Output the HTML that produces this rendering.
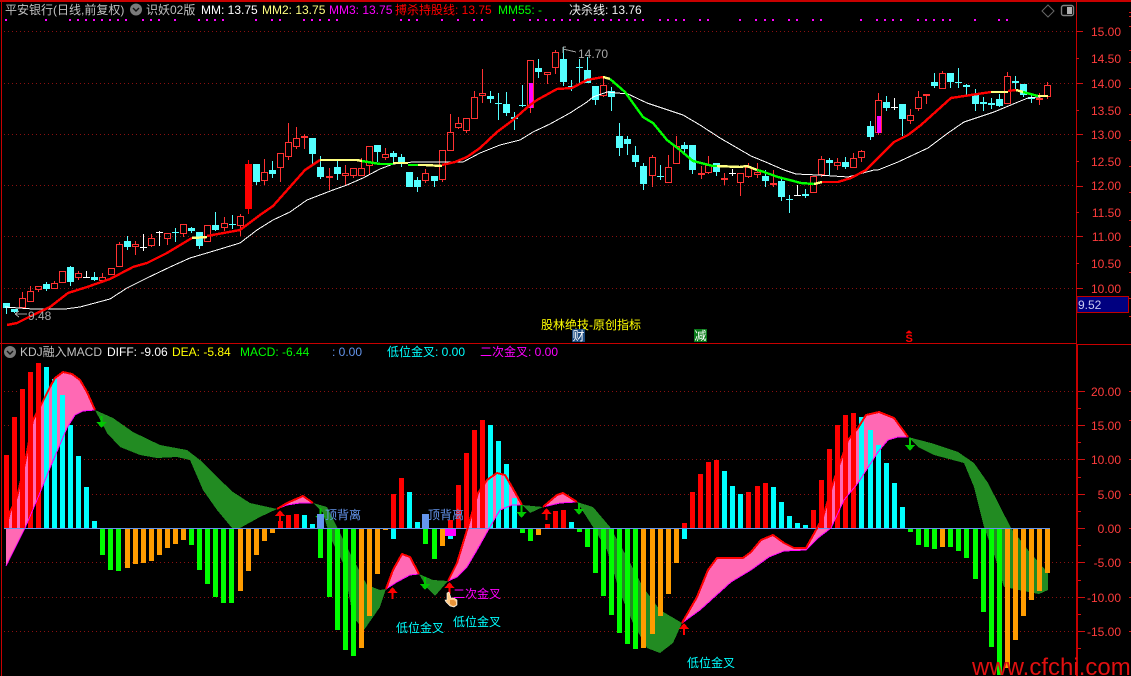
<!DOCTYPE html>
<html><head><meta charset="utf-8"><style>
html,body{margin:0;padding:0;background:#000;width:1131px;height:676px;overflow:hidden}
svg{display:block;position:absolute;left:0;top:0}
text{font-family:"Liberation Sans","WenQuanYi Zen Hei","Noto Sans CJK SC",sans-serif;font-size:12px}
</style></head><body>
<svg width="1131" height="676" viewBox="0 0 1131 676" xmlns="http://www.w3.org/2000/svg">
<rect width="1131" height="676" fill="#000"/>
<!-- grid -->
<path d="M4 31.5H1076M4 83.5H1076M4 134.5H1076M4 185.5H1076M4 236.5H1076M4 288.5H1076M4 391.5H1076M4 425.5H1076M4 459.5H1076M4 494.5H1076M4 562.5H1076M4 597.5H1076M4 631.5H1076" stroke="#8a1010" stroke-width="1" stroke-dasharray="1 3" fill="none" shape-rendering="crispEdges"/>
<!-- frame -->
<rect x="0" y="0" width="1131" height="2" fill="#c80000"/>
<path d="M1.5 0V676M1076.5 0V676M1077.5 344V676M0 343.5H1076M1076 344.5H1131" stroke="#c80000" stroke-width="1" fill="none" shape-rendering="crispEdges"/>
<path d="M1076 31.5h7M1076 58.5h3M1076 83.5h7M1076 110.5h3M1076 134.5h7M1076 161.5h3M1076 186.5h7M1076 212.5h3M1076 236.5h7M1076 263.5h3M1076 288.5h7M1078 391.5h7M1078 408.5h3M1078 425.5h7M1078 442.5h3M1078 459.5h7M1078 477.5h3M1078 494.5h7M1078 511.5h3M1078 528.5h7M1078 545.5h3M1078 562.5h7M1078 580.5h3M1078 597.5h7M1078 614.5h3M1078 631.5h7M1078 648.5h3M1129 12.5h2M1129 16.5h2M1129 26.5h2M1129 50.5h2M1129 62.5h2M1129 88.5h2M1129 114.5h2M1129 140.5h2M1129 166.5h2M1129 192.5h2M1129 220.5h2M1129 246.5h2M1129 272.5h2M1129 298.5h2M1129 316.5h2M1129 391.5h2M1129 420.5h2M1129 459.5h2M1129 494.5h2M1129 528.5h2M1129 562.5h2M1129 597.5h2M1129 631.5h2" stroke="#d01010" stroke-width="1" fill="none" shape-rendering="crispEdges"/>
<!-- magenta dots -->
<path fill="#ff00ff" shape-rendering="crispEdges" d="M5 19h2v2h-2zM45 19h2v2h-2zM69 19h2v2h-2zM77 19h2v2h-2zM85 19h2v2h-2zM93 19h2v2h-2zM101 19h2v2h-2zM109 19h2v2h-2zM117 19h2v2h-2zM125 19h2v2h-2zM142 19h2v2h-2zM150 19h2v2h-2zM158 19h2v2h-2zM174 19h2v2h-2zM198 19h2v2h-2zM206 19h2v2h-2zM214 19h2v2h-2zM222 19h2v2h-2zM255 19h2v2h-2zM271 19h2v2h-2zM279 19h2v2h-2zM303 19h2v2h-2zM311 19h2v2h-2zM319 19h2v2h-2zM328 19h2v2h-2zM336 19h2v2h-2zM400 19h2v2h-2zM408 19h2v2h-2zM416 19h2v2h-2zM441 19h2v2h-2zM457 19h2v2h-2zM473 19h2v2h-2zM481 19h2v2h-2zM513 19h2v2h-2zM529 19h2v2h-2zM537 19h2v2h-2zM545 19h2v2h-2zM553 19h2v2h-2zM561 19h2v2h-2zM569 19h2v2h-2zM577 19h2v2h-2zM594 19h2v2h-2zM602 19h2v2h-2zM610 19h2v2h-2zM618 19h2v2h-2zM626 19h2v2h-2zM634 19h2v2h-2zM642 19h2v2h-2zM659 19h2v2h-2zM667 19h2v2h-2zM675 19h2v2h-2zM683 19h2v2h-2zM699 19h2v2h-2zM707 19h2v2h-2zM739 19h2v2h-2zM755 19h2v2h-2zM764 19h2v2h-2zM772 19h2v2h-2zM788 19h2v2h-2zM796 19h2v2h-2zM812 19h2v2h-2zM820 19h2v2h-2zM860 19h2v2h-2zM876 19h2v2h-2zM884 19h2v2h-2zM892 19h2v2h-2zM900 19h2v2h-2zM917 19h2v2h-2zM925 19h2v2h-2zM933 19h2v2h-2zM942 19h2v2h-2zM949 19h2v2h-2zM974 19h2v2h-2zM998 19h2v2h-2zM1006 19h2v2h-2z"/>
<!-- candles: cyan -->
<path fill="#54ffff" shape-rendering="crispEdges" d="M3 303h7v5h-7zM11 309h7v3h-7zM43 284h7v5h-7zM67 267h7v15h-7zM91 277h7v3h-7zM124 241h7v6h-7zM188 228h7v3h-7zM196 232h7v14h-7zM212 225h7v5h-7zM253 164h7v18h-7zM269 170h7v4h-7zM309 138h7v16h-7zM317 167h7v10h-7zM334 167h7v7h-7zM374 145h7v7h-7zM390 153h7v4h-7zM398 157h7v5h-7zM406 172h7v15h-7zM414 180h7v7h-7zM431 176h7v5h-7zM487 96h7v3h-7zM503 104h7v9h-7zM511 117h7v2h-7zM535 68h7v4h-7zM560 59h7v23h-7zM584 70h7v13h-7zM592 86h7v14h-7zM608 91h7v6h-7zM616 136h7v12h-7zM624 139h7v5h-7zM632 155h7v7h-7zM640 166h7v18h-7zM681 145h7v4h-7zM689 145h7v25h-7zM713 163h7v9h-7zM762 176h7v5h-7zM778 181h7v16h-7zM826 160h7v3h-7zM842 162h7v5h-7zM867 126h7v11h-7zM883 102h7v6h-7zM899 104h7v15h-7zM931 82h7v4h-7zM947 73h7v9h-7zM963 85h7v2h-7zM972 95h7v9h-7zM980 102h7v2h-7zM988 103h7v2h-7zM996 99h7v7h-7zM1012 81h7v2h-7zM1020 84h7v11h-7zM1028 97h7v2h-7z"/>
<path fill="none" stroke="#54ffff" stroke-width="1" shape-rendering="crispEdges" d="M6.5 303V314M14.5 309V313M46.5 282V291M70.5 266V286M94.5 272V281M127.5 236V250M191.5 227V233M199.5 232V249M215.5 212V231M256.5 164V185M272.5 161V178M312.5 138V165M320.5 156V179M337.5 161V180M377.5 145V162M393.5 151V163M401.5 154V167M417.5 177V192M434.5 176V187M490.5 91V103M506.5 92V116M514.5 112V130M538.5 59V78M563.5 47V86M587.5 57V83M595.5 86V105M611.5 87V111M619.5 123V156M627.5 136V155M635.5 146V167M643.5 163V190M684.5 142V153M692.5 145V174M716.5 163V176M765.5 170V187M781.5 178V201M829.5 158V175M845.5 157V169M870.5 121V140M886.5 96V111M902.5 104V136M934.5 73V88M950.5 73V88M966.5 84V97M975.5 89V111M983.5 97V111M991.5 98V109M999.5 94V107M1015.5 76V91M1023.5 84V97M1031.5 94V103M175.5 228V242M172 232.5h7M232.5 215V229M229 224.5h7M498.5 93V120M495 103.5h7M522.5 85V107M519 105.5h7M571.5 80V91M568 86.5h7M579.5 59V83M576 67.5h7M660.5 165V180M657 176.5h7M789.5 195V213M786 199.5h7M805.5 189V198M802 195.5h7M802 194.5h7M958.5 68V88M955 82.5h7"/>
<path fill="none" stroke="#fff" stroke-width="1" shape-rendering="crispEdges" d="M86.5 271V278M83 277.5h7M143.5 234V251M140 247.5h7M159.5 231V246M156 232.5h7M732.5 169V176M729 173.5h7M797.5 185V196M794 195.5h7M894.5 98V110M891 107.5h7"/>
<!-- candles: red outlines -->
<path fill="none" stroke="#ff3232" stroke-width="1" shape-rendering="crispEdges" d="M19.5 298.5h6v9h-6zM27.5 291.5h6v10h-6zM35.5 286.5h6v3h-6zM51.5 283.5h6v5h-6zM59.5 271.5h6v11h-6zM75.5 273.5h6v4h-6zM99.5 277.5h6v3h-6zM108.5 268.5h6v6h-6zM116.5 244.5h6v22h-6zM132.5 244.5h6v2h-6zM148.5 238.5h6v7h-6zM164.5 233.5h6v5h-6zM180.5 224.5h6v9h-6zM204.5 225.5h6v16h-6zM221.5 223.5h6v4h-6zM237.5 216.5h6v9h-6zM261.5 172.5h6v8h-6zM277.5 153.5h6v14h-6zM285.5 142.5h6v14h-6zM293.5 138.5h6v8h-6zM342.5 173.5h6v2h-6zM350.5 168.5h6v7h-6zM358.5 168.5h6v7h-6zM366.5 146.5h6v19h-6zM382.5 154.5h6v3h-6zM422.5 173.5h6v7h-6zM439.5 150.5h6v29h-6zM447.5 132.5h6v18h-6zM455.5 123.5h6v4h-6zM463.5 118.5h6v12h-6zM471.5 97.5h6v21h-6zM479.5 93.5h6v2h-6zM527.5 60.5h6v47h-6zM544.5 72.5h6v2h-6zM552.5 52.5h6v15h-6zM600.5 85.5h6v10h-6zM649.5 157.5h6v18h-6zM665.5 167.5h6v15h-6zM673.5 146.5h6v17h-6zM705.5 165.5h6v7h-6zM721.5 178.5h6v1h-6zM737.5 173.5h6v9h-6zM745.5 167.5h6v9h-6zM754.5 172.5h6v2h-6zM810.5 176.5h6v16h-6zM818.5 159.5h6v15h-6zM834.5 162.5h6v3h-6zM850.5 158.5h6v9h-6zM858.5 151.5h6v6h-6zM875.5 100.5h6v32h-6zM907.5 115.5h6v5h-6zM915.5 97.5h6v11h-6zM923.5 94.5h6v1h-6zM939.5 73.5h6v15h-6zM1004.5 76.5h6v27h-6zM1044.5 85.5h6v11h-6zM22.5 292V298M30.5 286V291M38.5 290V292M54.5 281V283M78.5 271V273M78.5 278V280M102.5 273V277M119.5 242V244M135.5 241V244M135.5 247V255M151.5 234V238M151.5 246V247M167.5 239V245M183.5 234V237M224.5 217V223M224.5 228V231M240.5 214V216M240.5 226V236M264.5 159V172M264.5 181V185M280.5 168V182M288.5 123V142M288.5 157V160M296.5 127V138M296.5 147V149M345.5 165V173M345.5 176V186M353.5 176V178M361.5 158V168M369.5 166V175M385.5 148V154M385.5 158V160M425.5 169V173M425.5 181V183M442.5 180V182M450.5 114V132M458.5 117V123M458.5 128V129M466.5 131V133M474.5 91V97M482.5 69V93M482.5 96V103M530.5 108V113M547.5 75V84M555.5 50V52M555.5 68V74M603.5 76V85M603.5 96V97M652.5 155V157M652.5 176V187M668.5 155V167M676.5 136V146M708.5 156V165M708.5 173V174M724.5 173V178M724.5 180V185M740.5 183V196M748.5 163V167M748.5 177V178M757.5 163V172M757.5 175V178M821.5 156V159M821.5 175V177M837.5 158V162M837.5 166V170M853.5 153V158M861.5 150V151M861.5 158V162M878.5 93V100M878.5 133V135M910.5 109V115M910.5 121V124M918.5 91V97M918.5 109V111M926.5 96V104M942.5 71V73M1007.5 72V76M1047.5 82V85M1047.5 97V99M304.5 134V149M301 137.5h7M301 136.5h7M329.5 168V190M326 177.5h7M326 176.5h7M701.5 166V179M698 174.5h7M698 173.5h7M773.5 170V187M770 184.5h7M770 183.5h7M1039.5 93V105M1036 99.5h7M1036 98.5h7"/>
<path fill="#ff0000" shape-rendering="crispEdges" d="M245 164h7v45h-7zM248 160h1v54h-1z"/>
<path fill="#ff00ff" shape-rendering="crispEdges" d="M529 83h4v25h-4zM877 116h4v17h-4z"/>
<!-- MA lines -->
<polyline fill="none" stroke="#fff" stroke-width="1" shape-rendering="crispEdges" points="5,307 33,309 65,309 80,307 110,299 127,288 147,278 170,267 190,258 217,250 240,243 257,230 273,220 290,212 307,200 333,190 347,185 363,178 380,169 393,164 413,162 463,162 480,153 500,145 520,140 533,132 550,124 570,113 587,102 593,97 607,92 628,94 647,103 683,115 700,125 720,138 751,156 768,163 784,170 796,174 818,175 848,177 874,170 878,170 898,162 928,148 948,133 964,122 994,112 1018,102 1028,98 1048,96"/>
<g fill="none" stroke-width="2.4" shape-rendering="crispEdges" stroke-linejoin="round">
<polyline stroke="#ff0000" points="7,325 17,323 33,315 50,307 68,293 87,287 110,279 133,267 147,263 167,253 192,238"/>
<polyline stroke="#ffff80" points="192,238 207,237"/>
<polyline stroke="#ff0000" points="207,236 240,230 260,215 273,206 305,170 320,160"/>
<polyline stroke="#ffff80" points="320,160 357,160 362,161"/>
<polyline stroke="#00ff00" points="362,161 380,164 393,164"/>
<polyline stroke="#ffff80" points="393,163 408,163"/>
<polyline stroke="#00ff00" points="408,165 418,165"/>
<polyline stroke="#ffff80" points="418,165 425,165 442,166"/>
<polyline stroke="#ff0000" points="442,165 455,162 467,157 480,148 497,132 513,120 530,105 537,100 557,89 572,88 587,80 603,77"/>
<polyline stroke="#ffff80" points="603,77 610,79"/>
<polyline stroke="#00ff00" points="610,79 625,92 643,117 653,123 667,140 680,150 693,161 713,166 717,166"/>
<polyline stroke="#ffff80" points="717,166 740,167 747,166 757,170"/>
<polyline stroke="#00ff00" points="757,170 761,171 778,177 801,183 814,184"/>
<polyline stroke="#ffff80" points="814,184 822,182"/>
<polyline stroke="#ff0000" points="822,182 838,182 851,178 866,170 894,142 908,135 921,125 951,98 991,92"/>
<polyline stroke="#ffff80" points="991,92 1008,92"/>
<polyline stroke="#ff0000" points="1008,91 1016,90"/>
<polyline stroke="#ffff80" points="1016,90 1023,92"/>
<polyline stroke="#00ff00" points="1023,92 1038,96"/>
<polyline stroke="#ffff80" points="1038,96 1048,96"/>
</g>
<!-- price marks -->
<path fill="none" stroke="#a0a0a0" stroke-width="1" shape-rendering="crispEdges" d="M563 47v6M563 47h3M563 49l13 3M15 314h12M15 314l4-3M15 314l4 3"/>
<text x="578" y="58" fill="#a8a8a8">14.70</text>
<text x="28" y="320" fill="#a8a8a8">9.48</text>
<!-- ribbons -->
<g shape-rendering="crispEdges">
<path fill="#ff69b4" d="M6 528L10 512L17 497L25 463L33 420L42 403L50 387L55 378L63 372L72 374L80 380L87 392L95 410L83 411L75 415L67 428L50 468L37 500L25 528L6 566z"/>
<path fill="#228b22" d="M95 410L113 418L133 432L160 445L187 450L200 460L217 477L233 492L250 503L277 509L260 517L240 528L232 528L217 510L203 490L190 460L177 457L157 458L140 455L120 447L107 433z"/>
<path fill="#ff69b4" d="M277 509L287 503L303 496L313 503L300 503L287 505z"/>
<path fill="#228b22" d="M313 503L327 507L337 527L350 553L367 585L380 590L386 589L380 607L364 630L353 617L343 563L330 537L323 513z"/>
<path fill="#ff69b4" d="M386 589L393 570L402 554L410 557L419 574L410 575L397 582z"/>
<path fill="#228b22" d="M419 574L433 580L448 581L435 596L427 588z"/>
<path fill="#ff69b4" d="M448 581L457 563L467 530L478 493L487 480L497 473L505 475L512 487L522 505L512 505L500 510L490 527L477 550L467 567L457 577z"/>
<path fill="#228b22" d="M522 505L543 507L530 513z"/>
<path fill="#ff69b4" d="M543 507L557 495L563 493L577 502L560 503z"/>
<path fill="#228b22" d="M577 502L593 507L610 527L627 557L643 587L660 610L682 623L673 643L660 653L647 648L633 623L620 593L607 550L593 527z"/>
<path fill="#ff69b4" d="M682 623L697 597L708 570L717 558L743 558L751 552L761 540L773 535L784 543L794 548L806 548L816 530L823 517L834 480L848 440L858 428L866 415L879 412L894 418L908 437L898 437L888 440L878 452L858 483L844 500L831 528L818 538L806 550L784 551L769 557L751 570L731 582L700 610z"/>
<path fill="#228b22" d="M908 437L931 443L958 452L974 463L988 483L1011 528L1028 550L1048 573L1048 590L1039 594L1004 587L996 560L984 527L974 487L964 463L934 455L918 447z"/>
</g>
<!-- MACD bars -->
<g shape-rendering="crispEdges">
<path fill="#ff0000" d="M4 455h5V528h-5zM12 417h5V528h-5zM20 389h5V528h-5zM28 372h5V528h-5zM36 363h5V528h-5zM278 521h5V528h-5zM286 515h5V528h-5zM294 514h5V528h-5zM391 494h5V528h-5zM399 478h5V528h-5zM448 520h5V528h-5zM456 485h5V528h-5zM464 453h5V528h-5zM472 430h5V528h-5zM480 420h5V528h-5zM545 524h5V528h-5zM553 511h5V528h-5zM561 510h5V528h-5zM682 523h5V528h-5zM690 492h5V528h-5zM698 474h5V528h-5zM706 462h5V528h-5zM714 460h5V528h-5zM746 492h5V528h-5zM755 486h5V528h-5zM763 483h5V528h-5zM811 510h5V528h-5zM819 480h5V528h-5zM827 449h5V528h-5zM835 425h5V528h-5zM843 415h5V528h-5zM851 413h5V528h-5z"/>
<path fill="#00ffff" d="M44 367h5V528h-5zM52 379h5V528h-5zM60 395h5V528h-5zM68 425h5V528h-5zM76 456h5V528h-5zM84 487h5V528h-5zM92 521h5V528h-5zM302 515h5V528h-5zM310 524h5V528h-5zM407 492h5V528h-5zM415 522h5V528h-5zM488 425h5V528h-5zM496 441h5V528h-5zM504 464h5V528h-5zM512 498h5V528h-5zM569 522h5V528h-5zM722 471h5V528h-5zM730 486h5V528h-5zM738 494h5V528h-5zM771 487h5V528h-5zM779 502h5V528h-5zM787 516h5V528h-5zM795 523h5V528h-5zM803 525h5V528h-5zM859 417h5V528h-5zM868 430h5V528h-5zM876 445h5V528h-5zM884 463h5V528h-5zM892 483h5V528h-5zM900 507h5V528h-5zM391 528h5V539h-5zM448 528h5V539h-5zM682 528h5V539h-5z"/>
<path fill="#00ff00" d="M100 528h5V555h-5zM108 528h5V570h-5zM116 528h5V571h-5zM189 528h5V545h-5zM197 528h5V570h-5zM205 528h5V584h-5zM213 528h5V597h-5zM221 528h5V603h-5zM229 528h5V603h-5zM318 528h5V558h-5zM327 528h5V597h-5zM335 528h5V630h-5zM343 528h5V650h-5zM351 528h5V656h-5zM423 528h5V544h-5zM432 528h5V559h-5zM520 528h5V533h-5zM528 528h5V541h-5zM577 528h5V532h-5zM585 528h5V547h-5zM593 528h5V573h-5zM601 528h5V596h-5zM609 528h5V615h-5zM617 528h5V633h-5zM625 528h5V644h-5zM633 528h5V649h-5zM908 528h5V532h-5zM916 528h5V545h-5zM924 528h5V547h-5zM932 528h5V549h-5zM948 528h5V547h-5zM956 528h5V551h-5zM964 528h5V558h-5zM973 528h5V579h-5zM981 528h5V612h-5zM989 528h5V647h-5zM997 528h5V675h-5z"/>
<path fill="#ff9c00" d="M125 528h5V568h-5zM133 528h5V564h-5zM141 528h5V563h-5zM149 528h5V561h-5zM157 528h5V555h-5zM165 528h5V548h-5zM173 528h5V544h-5zM181 528h5V540h-5zM238 528h5V591h-5zM246 528h5V571h-5zM254 528h5V555h-5zM262 528h5V541h-5zM270 528h5V533h-5zM359 528h5V648h-5zM367 528h5V616h-5zM375 528h5V574h-5zM383 528h5V530h-5zM440 528h5V546h-5zM536 528h5V535h-5zM641 528h5V648h-5zM650 528h5V634h-5zM658 528h5V616h-5zM666 528h5V594h-5zM674 528h5V563h-5zM940 528h5V547h-5zM1005 528h5V668h-5zM1013 528h5V640h-5zM1021 528h5V616h-5zM1029 528h5V600h-5zM1037 528h5V591h-5zM1045 528h5V573h-5z"/>
</g>
<!-- arrows behind blockers -->
<path fill="#00c800" shape-rendering="crispEdges" d="M320.5 522l-5-6h4v-8h2v8h4z"/>
<g shape-rendering="crispEdges">
<path fill="#6495ed" d="M317 514h7v14h-7zM422 514h7v14h-7z"/>
<path fill="#ff00ff" d="M445 528h11v8h-11z"/>
<path fill="#6495ed" d="M4 528h1046v1H4z"/>
</g>
<!-- ribbon edges -->
<g fill="none" stroke="#ff00ff" stroke-width="1" shape-rendering="crispEdges">
<polyline points="6,566 25,528 37,500 50,468 67,428 75,415 83,411 95,410"/>
<polyline points="277,509 287,505 300,503 313,503"/>
<polyline points="386,589 397,582 410,575 419,574"/>
<polyline points="448,581 457,577 467,567 477,550 490,527 500,510 512,505 522,505"/>
<polyline points="543,507 560,503 577,502"/>
<polyline points="682,623 700,610 731,582 751,570 769,557 784,551 806,550 818,538 831,528 844,500 858,483 878,452 888,440 898,437 908,437"/>
</g>
<g fill="none" stroke="#ff0000" stroke-width="2" shape-rendering="crispEdges">
<polyline points="6,528 10,512 17,497 25,463 33,420 42,403 50,387 55,378 63,372 72,374 80,380 87,392 95,410"/>
<polyline points="277,509 287,503 303,496 313,503"/>
<polyline points="386,589 393,570 402,554 410,557 419,574"/>
<polyline points="448,581 457,563 467,530 478,493 487,480 497,473 505,475 512,487 522,505"/>
<polyline points="543,507 557,495 563,493 577,502"/>
<polyline points="682,623 697,597 708,570 717,558 743,558 751,552 761,540 773,535 784,543 794,548 806,548 816,530 823,517 834,480 848,440 858,428 866,415 879,412 894,418 908,437"/>
</g>
<!-- arrows -->
<path fill="#ff0000" shape-rendering="crispEdges" d="M280 510l5 6h-4v7h-2v-7h-4zM392.5 587l5 6h-4v6h-2v-6h-4zM449.5 582l5 6h-4v6h-2v-6h-4zM546.5 508l5 6h-4v6h-2v-6h-4zM684 623l5 6h-4v6h-2v-6h-4z"/>
<path fill="#00c800" shape-rendering="crispEdges" d="M101.5 428l-5-6h4v-6h2v6h4zM425 590l-5-6h4v-7h2v7h4zM521.5 518l-5-6h4v-7h2v7h4zM579 515l-5-6h4v-6h2v6h4zM910 451l-5-6h4v-7h2v7h4z"/>
<!-- hand -->
<path fill="#ffcc88" stroke="#fff" stroke-width=".6" d="M447 593l2-1 2 6 3 0 3 2 0 5-3 2-4-1-4-4-1-2 2 0z"/>
<path fill="#e8943a" d="M450 600h4l2 2v3l-3 1-3-2z"/>
<!-- header text -->
<text x="5" y="14" fill="#c0c0c0">平安银行(日线,前复权)</text>
<circle cx="136" cy="9.5" r="6" fill="#7a7a7a"/>
<path d="M133 8l3 3 3-3" fill="none" stroke="#111" stroke-width="1.4"/>
<text x="146" y="14" fill="#c0c0c0">识妖02版</text>
<text x="201" y="14" fill="#fff">MM: 13.75</text>
<text x="262" y="14" fill="#ffff80">MM2: 13.75</text>
<text x="329" y="14" fill="#ff00ff">MM3: 13.75</text>
<text x="395" y="14" fill="#ff0000">搏杀持股线: 13.75</text>
<text x="498" y="14" fill="#00ff00">MM55: -</text>
<text x="569" y="14" fill="#f0f0f0">决杀线: 13.76</text>
<path d="M1048 5l6 6-6 6-6-6z" fill="none" stroke="#666" stroke-width="1"/>
<rect x="1061.500" y="5.500" width="12" height="10" rx="2" fill="none" stroke="#808080" stroke-width="1.400"/>
<rect x="1067" y="7" width="5" height="7" fill="#b0b0b0"/>
<!-- axis labels -->
<g fill="#ff3c3c" text-anchor="end">
<text x="1121" y="36">15.00</text><text x="1121" y="63">14.50</text><text x="1121" y="88">14.00</text><text x="1121" y="115">13.50</text><text x="1121" y="139">13.00</text><text x="1121" y="166">12.50</text><text x="1121" y="190">12.00</text><text x="1121" y="217">11.50</text><text x="1121" y="241">11.00</text><text x="1121" y="268">10.50</text><text x="1121" y="293">10.00</text>
<text x="1121" y="396">20.00</text><text x="1121" y="430">15.00</text><text x="1121" y="464">10.00</text><text x="1121" y="499">5.00</text><text x="1121" y="533">0.00</text><text x="1121" y="567">-5.00</text><text x="1121" y="602">-10.00</text><text x="1121" y="636">-15.00</text>
</g>
<rect x="1077" y="296.500" width="51.500" height="16" fill="#000080" stroke="#c00000" stroke-width="1"/>
<text x="1078" y="309" fill="#c8c8f0">9.52</text>
<!-- middle labels -->
<text x="541" y="329" fill="#ffff00">股林绝技-原创指标</text>
<rect x="572" y="329" width="13" height="13" fill="#1c4a7e"/>
<text x="572.500" y="340" fill="#fff">财</text>
<rect x="694" y="329" width="13" height="13" fill="#0a7a1a"/>
<text x="694.500" y="340" fill="#fff">减</text>
<path d="M906 333h6M909 330.500l3 2.500h-6z" fill="#ff0000" stroke="#ff0000" stroke-width=".5"/>
<text x="905.500" y="342" fill="#ff0000" style="font-size:11px;font-weight:bold">S</text>
<!-- lower header -->
<circle cx="10" cy="352" r="6" fill="#7a7a7a"/>
<path d="M7 351l3 3 3-3" fill="none" stroke="#111" stroke-width="1.4"/>
<text x="20" y="356" fill="#c0c0c0">KDJ融入MACD</text>
<text x="107" y="356" fill="#fff">DIFF: -9.06</text>
<text x="172" y="356" fill="#ffff00">DEA: -5.84</text>
<text x="240" y="356" fill="#00ff00">MACD: -6.44</text>
<text x="332" y="356" fill="#6495ed">: 0.00</text>
<text x="387" y="356" fill="#00ffff">低位金叉: 0.00</text>
<text x="480" y="356" fill="#ff00ff">二次金叉: 0.00</text>
<!-- chart labels -->
<text x="325" y="519" fill="#6495ed">顶背离</text>
<text x="428" y="519" fill="#6495ed">顶背离</text>
<text x="453" y="598" fill="#ff00ff">二次金叉</text>
<text x="396" y="632" fill="#00ffff">低位金叉</text>
<text x="453" y="626" fill="#00ffff">低位金叉</text>
<text x="687" y="667" fill="#00ffff">低位金叉</text>
<text x="972" y="675" fill="#e01010" style="font-size:24px">www.cfchi.com</text>
</svg>
</body></html>
